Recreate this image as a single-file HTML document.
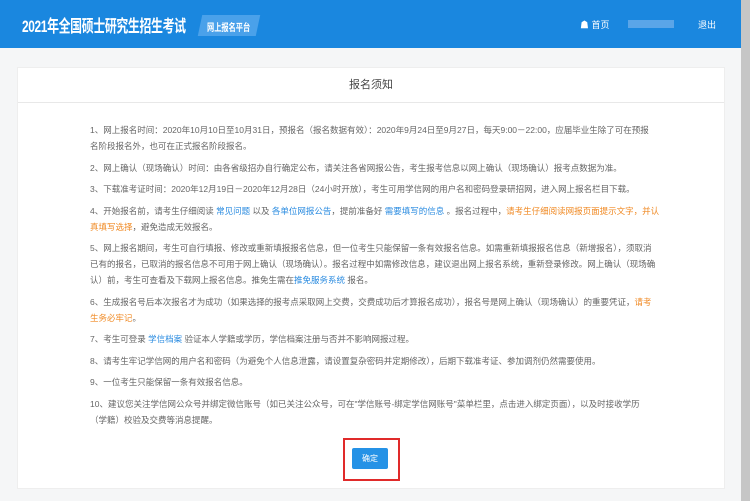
<!DOCTYPE html><html><head><meta charset="utf-8"><style>
body{margin:0;width:750px;height:501px;overflow:hidden;background:#f5f6f7;font-family:"Liberation Sans","Noto Sans CJK SC",sans-serif;position:relative}
.hd{position:absolute;left:0;top:0;width:741px;height:48px;background:#1a87df;color:#fff}
.t{position:absolute;left:22px;top:12px;font-size:17px;font-weight:bold;letter-spacing:-0.5px;transform:scaleX(0.7);transform-origin:0 0;white-space:nowrap}
.tag{position:absolute;left:200px;top:15px;width:58px;height:21px;background:#4aa1ea;transform:skewX(-12deg)}
.tagt{position:absolute;left:207px;top:19px;font-size:10px;font-weight:bold;transform:scaleX(0.72);transform-origin:0 0;white-space:nowrap}
.nav{position:absolute;top:18px;font-size:9px}
.sb{position:absolute;left:741px;top:0;width:9px;height:501px;background:#c6c6c6}
.card{position:absolute;left:17px;top:67px;width:706px;height:420px;background:#fff;border:1px solid #eee}
.ct{position:absolute;left:0;top:0;width:706px;height:34px;border-bottom:1px solid #e8e8e8;text-align:center;line-height:34px;font-size:11px;color:#444}
.bd{position:absolute;left:72px;top:54px;font-size:8.5px;color:#666;line-height:16px;white-space:nowrap}
.bd p{margin:0 0 5.5px}
.b{color:#2a8be0}.o{color:#f08a24}
.btn{position:absolute;left:352px;top:448px;width:36px;height:21px;background:#2592e6;border-radius:2px;color:#fff;font-size:8px;text-align:center;line-height:21px}
.rb{position:absolute;left:343px;top:438px;width:53px;height:39px;border:2px solid #e02a2a}
</style></head><body>
<div class="hd"><div class="t">2021年全国硕士研究生招生考试</div><div class="tag"></div><div class="tagt">网上报名平台</div>
<div class="nav" style="left:580px">&#9751; 首页</div>
<div style="position:absolute;left:628px;top:20px;width:46px;height:8px;background:#5aa5e8"></div>
<div class="nav" style="left:698px">退出</div></div>
<div class="sb"></div>
<div class="card"><div class="ct">报名须知</div>
<div class="bd">
<p>1、网上报名时间：2020年10月10日至10月31日，预报名（报名数据有效）：2020年9月24日至9月27日，每天9:00－22:00，应届毕业生除了可在预报<br>名阶段报名外，也可在正式报名阶段报名。</p>
<p>2、网上确认（现场确认）时间：由各省级招办自行确定公布，请关注各省网报公告，考生报考信息以网上确认（现场确认）报考点数据为准。</p>
<p>3、下载准考证时间：2020年12月19日－2020年12月28日（24小时开放），考生可用学信网的用户名和密码登录研招网，进入网上报名栏目下载。</p>
<p>4、开始报名前，请考生仔细阅读 <span class="b">常见问题</span> 以及 <span class="b">各单位网报公告</span>，提前准备好 <span class="b">需要填写的信息</span> 。报名过程中，<span class="o">请考生仔细阅读网报页面提示文字，并认<br>真填写选择</span>，避免造成无效报名。</p>
<p>5、网上报名期间，考生可自行填报、修改或重新填报报名信息，但一位考生只能保留一条有效报名信息。如需重新填报报名信息（新增报名），须取消<br>已有的报名，已取消的报名信息不可用于网上确认（现场确认）。报名过程中如需修改信息，建议退出网上报名系统，重新登录修改。网上确认（现场确<br>认）前，考生可查看及下载网上报名信息。推免生需在<span class="b">推免服务系统</span> 报名。</p>
<p>6、生成报名号后本次报名才为成功（如果选择的报考点采取网上交费，交费成功后才算报名成功），报名号是网上确认（现场确认）的重要凭证，<span class="o">请考<br>生务必牢记</span>。</p>
<p>7、考生可登录 <span class="b">学信档案</span> 验证本人学籍或学历，学信档案注册与否并不影响网报过程。</p>
<p>8、请考生牢记学信网的用户名和密码（为避免个人信息泄露，请设置复杂密码并定期修改），后期下载准考证、参加调剂仍然需要使用。</p>
<p>9、一位考生只能保留一条有效报名信息。</p>
<p>10、建议您关注学信网公众号并绑定微信账号（如已关注公众号，可在"学信账号-绑定学信网账号"菜单栏里，点击进入绑定页面），以及时接收学历<br>（学籍）校验及交费等消息提醒。</p>
</div></div>
<div class="rb"></div><div class="btn">确定</div>
</body></html>
